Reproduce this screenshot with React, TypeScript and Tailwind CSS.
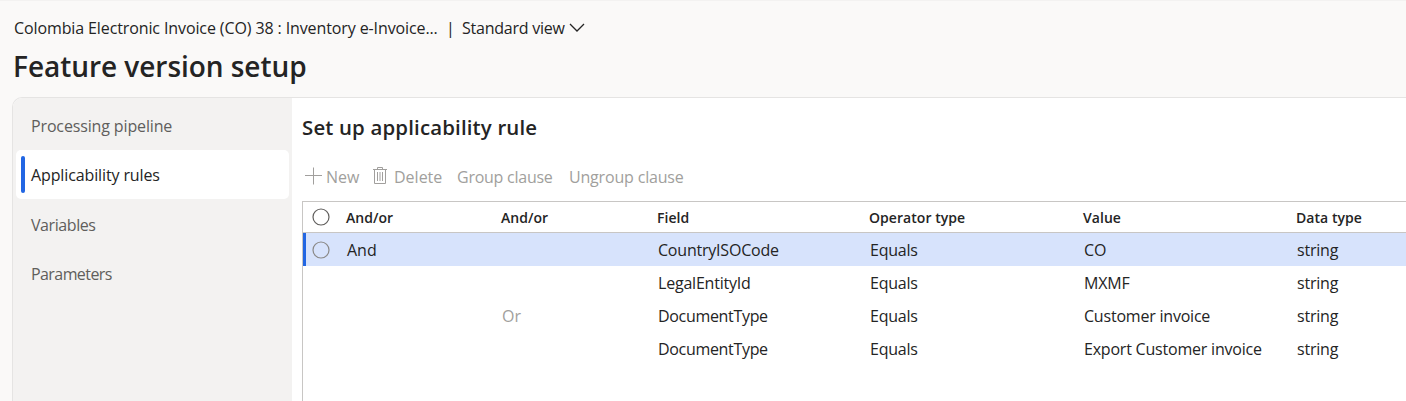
import React from 'react';

const navItems = [
  { label: 'Processing pipeline', track: 'tracking-[-0.14px]' },
  { label: 'Applicability rules', track: 'tracking-[-0.12px]', selected: true },
  { label: 'Variables', track: 'tracking-[-0.42px]' },
  { label: 'Parameters', track: 'tracking-[-0.58px]' },
];

const headers = ['And/or', 'And/or', 'Field', 'Operator type', 'Value', 'Data type'];

const rows = [
  ['And', '', 'CountryISOCode', 'Equals', 'CO', 'string'],
  ['', '', 'LegalEntityId', 'Equals', 'MXMF', 'string'],
  ['', 'Or', 'DocumentType', 'Equals', 'Customer invoice', 'string'],
  ['', '', 'DocumentType', 'Equals', 'Export Customer invoice', 'string'],
];

const columns = 'grid grid-cols-[43px_155px_156px_212px_214px_213px_1fr]';

function Radio({ className }: { className: string }) {
  return (
    <svg className={className} width="18" height="18" viewBox="0 0 18 18" fill="none" stroke="currentColor">
      <circle cx="9" cy="9" r="8" strokeWidth="1.2" />
    </svg>
  );
}

export default function App() {
  return (
    <div className="flex h-[401px] w-[1406px] flex-col overflow-hidden border-t border-[#f3f2f1] bg-[#faf9f8] font-['Open_Sans',sans-serif] text-[16px] text-[#242424]">
      <header className="h-[96px] shrink-0 pl-[13px] pt-[15px] whitespace-nowrap">
        <div className="flex h-6 items-center">
          <span className="w-[435px] pl-px tracking-[-0.11px]">Colombia Electronic Invoice (CO) 38 : Inventory e-Invoice...</span>
          <span className="-ml-[2px] w-[16px]">|</span>
          <span className="w-[106px] tracking-[-0.24px]">Standard view</span>
          <svg width="18" height="12" viewBox="0 0 18 12" fill="none" stroke="#242424" strokeWidth="1.3">
            <path d="M2 2L9 9L16 2" />
          </svg>
        </div>
        <h1 className="mt-[7px] text-[28px] font-semibold leading-[38px] tracking-[-0.04px]"><span>Feature version setup</span></h1>
      </header>
      <main className="ml-3 flex flex-1 overflow-hidden rounded-tl-[10px] border-l border-t border-[#e5e4e3] bg-white">
        <nav className="w-[279px] shrink-0 bg-[#f3f2f1] pl-[3px] pt-[3px]">
          {navItems.map((item) => (
            <div
              key={item.label}
              className={
                item.selected
                  ? 'mb-px flex h-[49px] w-[273px] items-center rounded-[5px] bg-white pl-[5px] text-[#242424]'
                  : 'flex h-[49.3px] items-center pl-[15px] text-[#605e5c]'
              }
            >
              {item.selected && <span className="mr-[6px] h-[37px] w-1 rounded-full bg-[#2266e3]" />}
              <span className={item.track}>{item.label}</span>
            </div>
          ))}
        </nav>
        <section className="flex flex-1 flex-col pl-[10px] pt-[13px] whitespace-nowrap">
          <h2 className="h-8 text-[20.4px] font-semibold leading-8 tracking-[0.17px]"><span>Set up applicability rule</span></h2>
          <div className="mt-[18px] flex h-8 items-center text-[#a19f9d]">
            <div className="flex w-[70px] items-center">
              <svg className="mr-[4px] ml-[2px] mb-[3px]" width="18" height="18" viewBox="0 0 18 18" stroke="#a19f9d">
                <path d="M9.5 0.5V17.5M1 8.5H18" />
              </svg>
              <span>New</span>
            </div>
            <div className="flex w-[85px] items-center">
              <svg className="mr-[6px] mb-[3px]" width="16" height="18" viewBox="0 0 16 18" fill="none" stroke="#a19f9d">
                <path d="M1 2.5H15M5.5 2.5V0.5H10.5V2.5M2.5 2.5V16.5H13.5V2.5M5.5 5V14M8 5V14M10.5 5V14" />
              </svg>
              <span>Delete</span>
            </div>
            <span className="w-[112px] tracking-[-0.25px]"><span>Group clause</span></span>
            <span className="tracking-[-0.18px]">Ungroup clause</span>
          </div>
          <div className="mt-[8px] flex-1 border-l border-t border-[#c8c6c4]">
            <div className={`${columns} h-[31px] items-center border-b border-[#c8c6c4] text-[14px] font-semibold tracking-[0.05px]`}>
              <Radio className="ml-[9px] mb-px text-[#605e5c]" />
              {headers.map((h, i) => (
                <div key={i}><span>{h}</span></div>
              ))}
            </div>
            {rows.map((row, r) => (
              <div key={r} className={r === 0 ? `${columns} relative h-[33px] items-center bg-[#d7e3fc]` : `${columns} h-[33px] items-center`}>
                {r === 0 ? <Radio className="ml-[9px] mt-px text-[#8a8886]" /> : <span />}
                {row.map((cell, c) => (
                  <div key={c} className={cell === 'Or' ? 'pl-px text-[#a19f9d]' : cell === 'DocumentType' ? 'pl-px tracking-[-0.32px]' : cell.length < 4 ? 'pl-px' : 'pl-px tracking-[-0.21px]'}><span>{cell}</span></div>
                ))}
                {r === 0 && <span className="absolute left-0 top-0 h-full w-[3px] bg-[#2266e3]" />}
              </div>
            ))}
          </div>
        </section>
      </main>
    </div>
  );
}
